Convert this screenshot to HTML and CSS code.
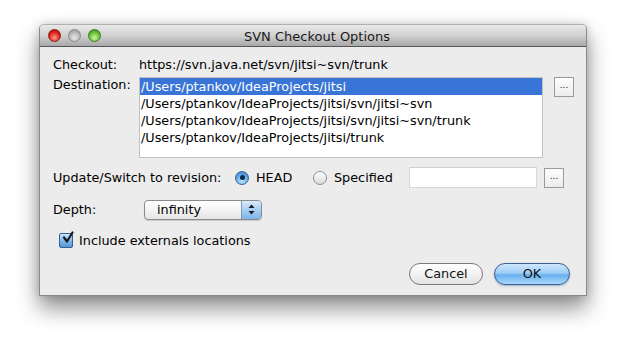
FILE: index.html
```html
<!DOCTYPE html>
<html>
<head>
<meta charset="utf-8">
<link rel="stylesheet" href="styles.css">
</head>
<body>
<div class="window">
  <div class="titlebar">
    <div class="lights">
      <span class="light red"></span>
      <span class="light gray"></span>
      <span class="light green"></span>
    </div>
    <div class="title">SVN Checkout Options</div>
  </div>
  <div class="content">
    <div class="row r-checkout">
      <span class="label">Checkout:</span>
      <span class="url">https://svn.java.net/svn/jitsi~svn/trunk</span>
    </div>
    <div class="row r-dest">
      <span class="label">Destination:</span>
      <div class="listbox">
        <div class="item sel">/Users/ptankov/IdeaProjects/jitsi</div>
        <div class="item">/Users/ptankov/IdeaProjects/jitsi/svn/jitsi~svn</div>
        <div class="item">/Users/ptankov/IdeaProjects/jitsi/svn/jitsi~svn/trunk</div>
        <div class="item">/Users/ptankov/IdeaProjects/jitsi/trunk</div>
      </div>
      <button class="dots dots-dest">...</button>
    </div>
    <div class="row r-rev">
      <span class="label">Update/Switch to revision:</span>
      <span class="radio on"><span class="dot"></span></span>
      <span class="rlabel head">HEAD</span>
      <span class="radio off"></span>
      <span class="rlabel spec">Specified</span>
      <span class="field"></span>
      <button class="dots dots-rev">...</button>
    </div>
    <div class="row r-depth">
      <span class="label">Depth:</span>
      <div class="combo">
        <span class="combo-text">infinity</span>
        <span class="stepper">
          <svg width="7" height="11" viewBox="0 0 7 11"><path d="M3.5 0.5 L6.5 4 L0.5 4 Z" fill="#1a1a1a"/><path d="M3.5 10.5 L6.5 7 L0.5 7 Z" fill="#1a1a1a"/></svg>
        </span>
      </div>
    </div>
    <div class="row r-ext">
      <span class="check">
        <svg width="14" height="14" viewBox="0 0 14 14"><path d="M3 6.5 L6 10.5 L11.5 1.5" fill="none" stroke="#1b1b1b" stroke-width="2.2" stroke-linecap="round" stroke-linejoin="round"/></svg>
      </span>
      <span class="clabel">Include externals locations</span>
    </div>
    <div class="buttons">
      <button class="pill cancel">Cancel</button>
      <button class="pill ok">OK</button>
    </div>
  </div>
</div>
</body>
</html>
```
FILE: styles.css
```css
html, body { margin: 0; padding: 0; background: #ffffff; }
body {
  font-family: "DejaVu Sans", "Lucida Grande", sans-serif;
  font-size: 12.8px;
  color: #000;
  padding: 24px 0 0 39px;
  width: 626px; height: 351px; box-sizing: border-box; overflow: hidden;
}
.window {
  width: 548px; height: 272px;
  box-sizing: border-box;
  border: 1px solid #8a8a8a;
  border-top: 1px solid #b0b0b0;
  border-radius: 5px 5px 0 0;
  background: #ececec;
  box-shadow: 0 12px 22px rgba(0,0,0,0.45), 0 0 10px rgba(0,0,0,0.15);
  display: flex; flex-direction: column;
}
.titlebar {
  height: 21px;
  flex: none;
  background: linear-gradient(#e9e9e9, #d0d0d0 50%, #a9a9a9);
  border-bottom: 1px solid #555;
  border-radius: 4px 4px 0 0;
  display: flex; align-items: center;
}
.lights { display: flex; gap: 7px; padding-left: 8px; width: 80px; }
.light { width: 13px; height: 13px; border-radius: 50%; display: block; box-sizing: border-box; }
.red { background: radial-gradient(circle at 50% 70%, #ff9a8f, #e0231c 55%, #9c0c06); border: 1px solid #8a1a12; }
.gray { background: radial-gradient(circle at 50% 70%, #e8e8e8, #b9b9b9 55%, #8c8c8c); border: 1px solid #8a8a8a; }
.green { background: radial-gradient(circle at 50% 70%, #c9f59a, #6cc03a 55%, #2f7d12); border: 1px solid #3e7a22; }
.title { flex: 1; text-align: center; margin-left: -80px; font-size: 13px; color: #1a1a1a; padding-top: 1px; }
.content { flex: 1; padding: 0 0 0 13px; }
.row { display: flex; }
.label { display: block; }
.r-checkout { margin-top: 9px; height: 16px; align-items: center; }
.r-checkout .label { width: 86px; }
.r-dest { margin-top: 5px; align-items: flex-start; }
.r-dest .label { width: 86px; line-height: 15px; }
.listbox {
  width: 404px; height: 81px; box-sizing: border-box;
  background: #fff; border: 1px solid #c2c2c2;
}
.item { height: 17px; line-height: 17px; padding-left: 1px; white-space: nowrap; }
.item.sel { background: #3875d7; color: #fff; }
.dots {
  font-family: "DejaVu Sans", sans-serif; font-size: 9px;
  width: 20px; height: 20px; padding: 0 0 4px 0; box-sizing: border-box;
  border: 1px solid #9a9a9a; background: linear-gradient(#fdfdfd, #ececec);
  color: #222; margin: 0;
}
.dots-dest { margin-left: 11px; }
.r-rev { margin-top: 9px; align-items: center; height: 21px; }
.r-rev .label { width: 182px; white-space: nowrap; }
.radio {
  width: 14px; height: 14px; border-radius: 50%; box-sizing: border-box; flex: none;
  display: flex; align-items: center; justify-content: center;
}
.radio.on { background: radial-gradient(circle at 50% 75%, #bfe3ff, #5aa4e6 60%, #3a7bc8); border: 1px solid #3b5f8d; }
.radio.off { background: linear-gradient(#ffffff, #dcdcdc); border: 1px solid #8e8e8e; }
.dot { width: 5px; height: 5px; border-radius: 50%; background: #102a4a; }
.rlabel { margin-left: 7px; }
.head { width: 57px; }
.spec { width: 75px; }
.field { width: 128px; height: 21px; box-sizing: border-box; background: #fff; border: 1px solid #d8d8d8; border-top-color: #cfcfcf; }
.dots-rev { margin-left: 7px; height: 20px; }
.r-depth { margin-top: 11px; align-items: center; height: 21px; }
.r-depth .label { width: 91px; }
.combo {
  width: 118px; height: 20px; box-sizing: border-box;
  border: 1px solid #8b8b8b; border-radius: 4px;
  background: linear-gradient(#ffffff, #f4f4f4 50%, #e4e4e4);
  display: flex; align-items: center; overflow: hidden;
  box-shadow: 0 1px 1px rgba(0,0,0,0.15);
}
.combo-text { flex: 1; padding-left: 12px; }
.stepper {
  width: 19px; height: 100%; border-left: 1px solid #7d98bd;
  background: linear-gradient(#d9ecfd, #a6cdf3 50%, #7fb4ea);
  display: flex; align-items: center; justify-content: center;
}
.r-ext { margin-top: 12px; align-items: center; height: 16px; padding-left: 6px; }
.check {
  width: 14px; height: 15px; box-sizing: border-box; position: relative;
  border: 1px solid #3b5f8d; border-radius: 2px;
  background: linear-gradient(#c9e6ff, #7ab6ee 55%, #5597dc);
}
.check svg { position: absolute; left: 1px; top: -3px; }
.clabel { margin-left: 6px; }
.buttons { display: flex; justify-content: flex-end; gap: 11px; padding-right: 16px; margin-top: 15px; }
.pill {
  font-family: "DejaVu Sans", sans-serif; font-size: 12.8px;
  height: 22px; border-radius: 11px; box-sizing: border-box; margin: 0;
  padding: 0 0 1px 0;
}
.cancel { width: 74px; border: 1px solid #7a7a7a; background: linear-gradient(#ffffff, #f2f2f2 50%, #e2e2e2); color: #111; }
.ok {
  width: 76px; border: 1px solid #3c5f93; color: #111;
  background: linear-gradient(#cfe7fd, #9ecdf6 45%, #6bb0ee 55%, #a6d8fb);
  box-shadow: 0 1px 2px rgba(40,90,160,0.4);
}
```
